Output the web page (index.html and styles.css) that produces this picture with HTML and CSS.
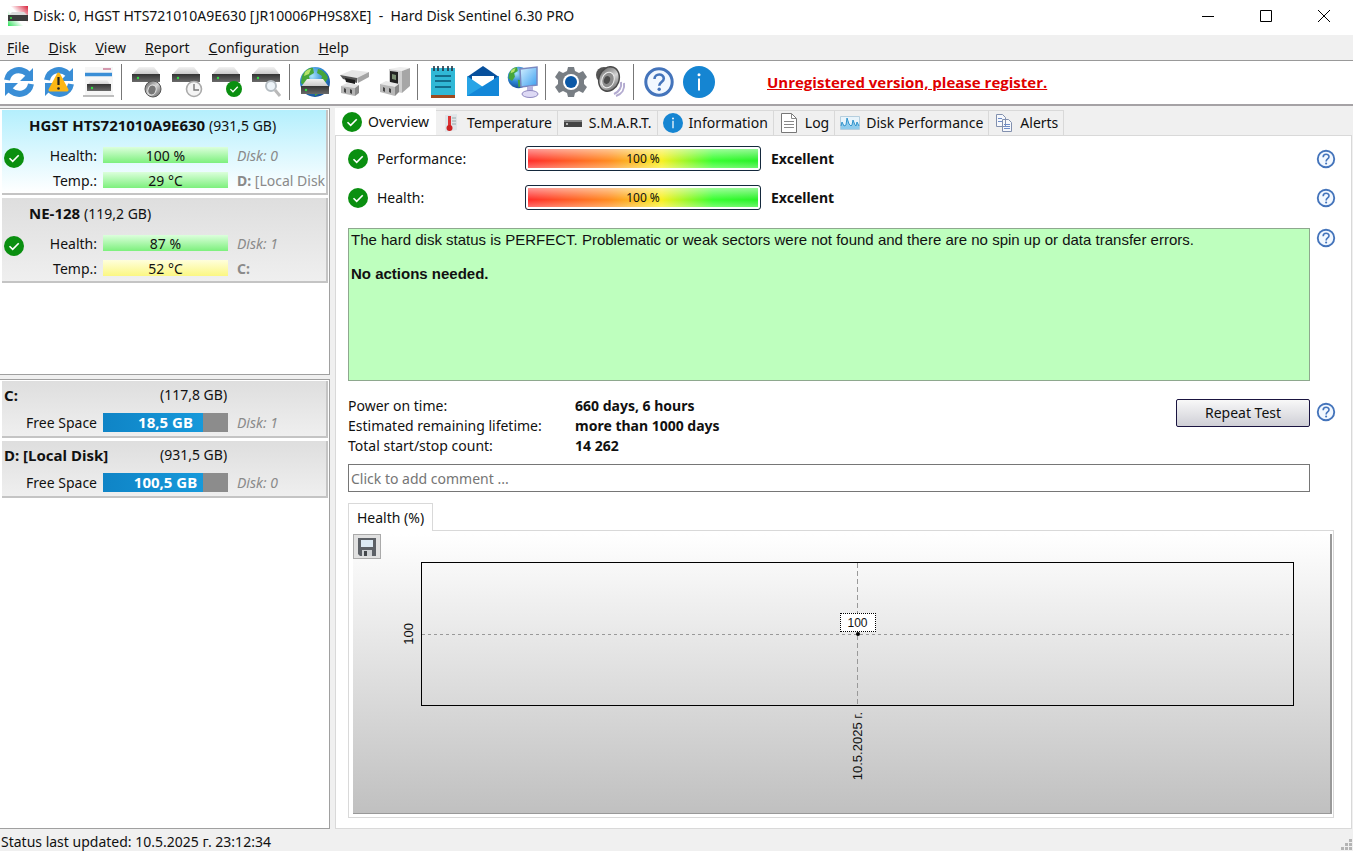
FILE: index.html
```html
<!DOCTYPE html>
<html lang="en">
<head>
  <meta charset="UTF-8">
  <meta name="viewport" content="width=device-width, initial-scale=1.0">
  <title>Hard Disk Sentinel 6.30 PRO</title>
  <link rel="stylesheet" href="styles.css">
</head>
<body>
  <svg class="defs" aria-hidden="true">
    <defs>
      <linearGradient id="g-top" x1="0" y1="0" x2="0" y2="1"><stop offset="0" stop-color="#f2f2f2"/><stop offset="1" stop-color="#c4c4c4"/></linearGradient>
      <linearGradient id="g-front" x1="0" y1="0" x2="0" y2="1"><stop offset="0" stop-color="#333"/><stop offset="1" stop-color="#6a6a6a"/></linearGradient>
      <linearGradient id="g-logo" x1="1" y1="0" x2="0" y2="1"><stop offset="0" stop-color="#d8203a"/><stop offset="0.45" stop-color="#fff"/><stop offset="0.6" stop-color="#fff"/><stop offset="1" stop-color="#2ee05a"/></linearGradient>
      <radialGradient id="g-globe" cx="0.4" cy="0.3" r="0.8"><stop offset="0" stop-color="#a8e4fb"/><stop offset="0.5" stop-color="#2c86d4"/><stop offset="1" stop-color="#123f86"/></radialGradient>
      <linearGradient id="g-speaker" x1="0" y1="0" x2="1" y2="1"><stop offset="0" stop-color="#555"/><stop offset="0.5" stop-color="#d4d4d4"/><stop offset="1" stop-color="#555"/></linearGradient>
      <linearGradient id="g-screen" x1="0" y1="0" x2="1" y2="1"><stop offset="0" stop-color="#d5f0ff"/><stop offset="1" stop-color="#3a9ff0"/></linearGradient>
    </defs>
    <symbol id="i-ok" viewBox="0 0 20 20">
      <circle cx="10" cy="10" r="10" fill="#0a8f10"/>
      <path d="M5.500 10.200l3.200 3.200 6-6.200" fill="none" stroke="#fff" stroke-width="1.600"/>
    </symbol>
    <symbol id="i-help" viewBox="0 0 32 32">
      <circle cx="16" cy="16" r="13.200" fill="#f2f8ff" stroke="#4474bb" stroke-width="3"/>
      <path d="M11.500 13c0-6 9.300-6 9.300-.5 0 3.500-4.600 3.500-4.600 7.300" fill="none" stroke="#4474bb" stroke-width="2.600"/>
      <circle cx="16.200" cy="23.200" r="1.700" fill="#4474bb"/>
    </symbol>
    <symbol id="i-info" viewBox="0 0 32 32">
      <circle cx="16" cy="16" r="16" fill="#1585d2"/>
      <circle cx="16" cy="8.800" r="1.500" fill="#fff"/>
      <path d="M16 12.500v12" stroke="#fff" stroke-width="2"/>
    </symbol>
    <symbol id="i-refresh" viewBox="0 0 32 32">
      <path d="M4 14C6 4 17 1 25 8M28 18C26 28 15 31 7 24" fill="none" stroke="#3a8ed6" stroke-width="6"/>
      <path d="M30 2v13H17zM2 30V17h13z" fill="#3a8ed6"/>
    </symbol>
    <symbol id="i-drive" viewBox="0 0 32 32">
      <path d="M8 1h15l6 8H1z" fill="url(#g-top)"/>
      <path d="M1 8h28v8H1z" fill="url(#g-front)"/>
      <circle cx="7" cy="12" r="1.200" fill="#3d4"/>
    </symbol>
    <symbol id="i-globe" viewBox="0 0 32 32">
      <circle cx="16" cy="16" r="15" fill="url(#g-globe)"/>
      <path d="M3 10c3-6 8-9 11-8l1 5-5 3 1 5-4 6-5-4zM19 3c5 1 9 5 10 9l-3 5-4-2 1-5-5-3zM15 19l6 1 1 6-6 4z" fill="#46a63a"/>
      <path d="M6 6c2-2 4-3 6-3l-2 5-5 2z" fill="#b5e26a"/>
    </symbol>
    <symbol id="i-speaker" viewBox="0 0 32 32">
      <ellipse cx="9" cy="9" rx="8" ry="8" fill="#555"/>
      <ellipse cx="14" cy="13" rx="10" ry="12.500" fill="url(#g-speaker)" stroke="#4a4a4a" stroke-width="1.500" transform="rotate(20 14 13)"/>
      <ellipse cx="13" cy="14" rx="6" ry="8" fill="#8d8d8d" stroke="#eee" transform="rotate(20 13 14)"/>
      <ellipse cx="12" cy="14" rx="3" ry="4" fill="#4c4c4c" transform="rotate(20 12 14)"/>
      <path d="M26 16c1 5-2 10-7 12M29 17c1 6-2 11-8 13" fill="none" stroke="#b3abd0" stroke-width="2"/>
    </symbol>
  </svg>

  <header class="titlebar">
    <svg class="app-logo" viewBox="0 0 20 20">
      <path d="M0 0h20v20H0z" fill="url(#g-logo)"/>
      <path d="M4 6h12l4 4H0z" fill="#dcdcdc"/><path d="M0 9h20v6H0z" fill="#3c3c3c"/>
      <circle cx="3" cy="12" r="1" fill="#3d4"/>
    </svg>
    <h1>Disk: 0, HGST HTS721010A9E630 [JR10006PH9S8XE] &nbsp;- &nbsp;Hard Disk Sentinel 6.30 PRO</h1>
    <div class="window-buttons">
      <button type="button" aria-label="Minimize"><svg viewBox="0 0 14 14"><path d="M1 7.500h12"/></svg></button>
      <button type="button" aria-label="Maximize"><svg viewBox="0 0 14 14"><path d="M1.500 1.500h11v11h-11z"/></svg></button>
      <button type="button" aria-label="Close"><svg viewBox="0 0 14 14"><path d="M1 1l12 12M13 1L1 13"/></svg></button>
    </div>
  </header>

  <nav class="menubar">
    <a href="#"><u>F</u>ile</a>
    <a href="#"><u>D</u>isk</a>
    <a href="#"><u>V</u>iew</a>
    <a href="#"><u>R</u>eport</a>
    <a href="#"><u>C</u>onfiguration</a>
    <a href="#"><u>H</u>elp</a>
  </nav>

  <div class="toolbar">
    <div class="tool-group">
      <button type="button" aria-label="Refresh"><svg viewBox="0 0 32 32"><use href="#i-refresh"/></svg></button>
      <button type="button" aria-label="Refresh now"><svg viewBox="0 0 32 32"><use href="#i-refresh"/><path d="M15.500 8L24 24H7z" fill="#fcb614" stroke="#fcb614" stroke-width="3" stroke-linejoin="round"/><path d="M15.500 11v8" stroke="#222" stroke-width="2.200"/><circle cx="15.500" cy="22.500" r="1.300" fill="#222"/></svg></button>
      <button type="button" aria-label="Drive list"><svg viewBox="0 0 32 32"><path d="M2 1h28v29H2z" fill="#f6f6f6"/><path d="M20 3h8" stroke="#b23a66"/><path d="M2 8.500h27" stroke="#3a8ed6" stroke-width="3.500"/><path d="M8 14h16l4 6H4z" fill="url(#g-top)"/><path d="M4 18h24v7H4z" fill="url(#g-front)"/><circle cx="9" cy="22" r="1.200" fill="#3d4"/><path d="M0 30h31" stroke="#aaa" stroke-width="1.500"/></svg></button>
    </div>
    <div class="tool-group">
      <button type="button" aria-label="Disk sound"><svg viewBox="0 0 32 32"><use href="#i-drive"/><ellipse cx="22" cy="23" rx="8" ry="8" fill="url(#g-speaker)" stroke="#555"/><ellipse cx="21" cy="24" rx="4" ry="5" fill="#777" stroke="#e4e4e4" transform="rotate(20 21 24)"/></svg></button>
      <button type="button" aria-label="Disk schedule"><svg viewBox="0 0 32 32"><use href="#i-drive"/><circle cx="23" cy="23" r="7.500" fill="#f4f4f4" stroke="#aaa" stroke-width="1.600"/><path d="M23 18v6h5" fill="none" stroke="#777" stroke-width="1.400"/></svg></button>
      <button type="button" aria-label="Disk test"><svg viewBox="0 0 32 32"><use href="#i-drive"/><use href="#i-ok" x="15" y="15" width="16" height="16"/></svg></button>
      <button type="button" aria-label="Disk inspect"><svg viewBox="0 0 32 32"><use href="#i-drive"/><circle cx="20" cy="20" r="5" fill="#edf4f9" stroke="#b4bcc2" stroke-width="2"/><path d="M24 24l5 6" stroke="#b9b9b9" stroke-width="3"/></svg></button>
    </div>
    <div class="tool-group">
      <button type="button" aria-label="Online disk info"><svg viewBox="0 0 32 32"><use href="#i-globe"/><path d="M8 13h16l6 8H2z" fill="url(#g-top)"/><path d="M2 20h28v8H2z" fill="url(#g-front)"/><circle cx="7" cy="24" r="1.200" fill="#3d4"/></svg></button>
      <button type="button" aria-label="Disconnect"><svg viewBox="0 0 32 32"><path d="M1 9l12-5 17 2-12 6z" fill="#e6e6e6"/><path d="M18 12l12-6v5l-11 6z" fill="#a4a4a4"/><path d="M1 9l17 3v5L4 13z" fill="#555"/><path d="M6 12l10 2v4l-9-2z" fill="#1e1e1e"/><path d="M2 20l6-3 12 2-4 3z" fill="#e2e2e2"/><path d="M2 20l14 2v8L2 27z" fill="#b4b4b4"/><path d="M16 22l4-3v8l-4 3z" fill="#8a8a8a"/><path d="M5 22l2 1v4l-2-1zM11 23l2 1v4l-2-1z" fill="#444"/></svg></button>
      <button type="button" aria-label="Connect"><svg viewBox="0 0 32 32"><path d="M10 3l11-2 10 1-8 3z" fill="#eee"/><path d="M10 3l13 2v22l-13-3z" fill="#cfcfcf"/><path d="M23 5l8-3v18l-8 7z" fill="#a6a6a6"/><path d="M11 5l8 1v12l-8-1z" fill="#222"/><path d="M13 8l4 1v5l-4-1z" fill="#788c70"/><path d="M1 18l6-3 13 3-4 3z" fill="#e8e8e8"/><path d="M1 18l15 3v9L1 26z" fill="#b8b8b8"/><path d="M16 21l4-3v8l-4 4z" fill="#888"/><path d="M4 21l2 1v4l-2-1zM10 22l2 1v4l-2-1z" fill="#444"/></svg></button>
    </div>
    <div class="tool-group">
      <button type="button" aria-label="Report"><svg viewBox="0 0 32 32"><path d="M4 2h24v27H4z" fill="#30b8d6"/><path d="M4 29h24v3H4z" fill="#a04a1e"/><path d="M7 0v5M11 0v5M16 0v5M21 0v5M25 0v5" stroke="#234" stroke-width="1.600"/><path d="M8 10h16M8 15h16M8 21h16" stroke="#126d8c" stroke-width="2"/></svg></button>
      <button type="button" aria-label="Send mail"><svg viewBox="0 0 32 32"><path d="M0 11L16 0l16 11v18H0z" fill="#08509c"/><path d="M5 10h22v12H5z" fill="#fff"/><path d="M0 10l16 11 16-11v20H0z" fill="#27a4e6"/><path d="M0 30l32-20v20z" fill="#1387d8"/></svg></button>
      <button type="button" aria-label="Network"><svg viewBox="0 0 32 32"><use href="#i-globe" width="23" height="23"/><path d="M13 3l17-2v18l-16 2z" fill="url(#g-screen)" stroke="#7a88c0" stroke-width="1.500"/><path d="M20 21l6-1v6h-6z" fill="#b9b4de"/><ellipse cx="23" cy="28" rx="8" ry="3.500" fill="#ddd9f4" stroke="#8f88c0"/></svg></button>
    </div>
    <div class="tool-group">
      <button type="button" aria-label="Configuration"><svg viewBox="0 0 32 32"><path d="M13 1h6l1 4 4 2 4-2 4 6-3 3v4l3 3-4 6-4-2-4 2-1 4h-6l-1-4-4-2-4 2-4-6 3-3v-4l-3-3 4-6 4 2 4-2z" fill="#787e84"/><circle cx="16" cy="16" r="8" fill="#fff"/><circle cx="16" cy="16" r="6" fill="#0b58a6"/></svg></button>
      <button type="button" aria-label="Alert sound"><svg viewBox="0 0 32 32"><use href="#i-speaker"/></svg></button>
    </div>
    <div class="tool-group">
      <button type="button" aria-label="Help"><svg viewBox="0 0 32 32"><use href="#i-help"/></svg></button>
      <button type="button" aria-label="About"><svg viewBox="0 0 32 32"><use href="#i-info"/></svg></button>
    </div>
    <a class="register" href="#">Unregistered version, please register.</a>
  </div>

  <div class="workspace">
    <aside class="sidebar">
      <section class="disk-list">
        <article class="disk selected">
          <h2>HGST HTS721010A9E630 <span>(931,5 GB)</span></h2>
          <svg class="status-icon" viewBox="0 0 20 20"><use href="#i-ok"/></svg>
          <span class="label">Health:</span><span class="bar green">100 %</span><em>Disk: 0</em>
          <span class="label">Temp.:</span><span class="bar green">29 °C</span><span class="drive"><b>D:</b> [Local Disk</span>
        </article>
        <article class="disk">
          <h2>NE-128 <span>(119,2 GB)</span></h2>
          <svg class="status-icon" viewBox="0 0 20 20"><use href="#i-ok"/></svg>
          <span class="label">Health:</span><span class="bar green">87 %</span><em>Disk: 1</em>
          <span class="label">Temp.:</span><span class="bar yellow">52 °C</span><span class="drive"><b>C:</b></span>
        </article>
      </section>
      <section class="volume-list">
        <article class="volume">
          <h2>C:</h2><span class="size">(117,8 GB)</span>
          <span class="label">Free Space</span><span class="bar space">18,5 GB</span><em>Disk: 1</em>
        </article>
        <article class="volume">
          <h2>D: [Local Disk]</h2><span class="size">(931,5 GB)</span>
          <span class="label">Free Space</span><span class="bar space">100,5 GB</span><em>Disk: 0</em>
        </article>
      </section>
    </aside>

    <main class="content">
      <div class="tabs" role="tablist">
        <button type="button" role="tab" class="active" aria-selected="true"><svg viewBox="0 0 20 20"><use href="#i-ok"/></svg>Overview</button>
        <button type="button" role="tab"><svg viewBox="0 0 20 20"><path d="M4 2l12-1v16l-12 2z" fill="#dfe5e8"/><path d="M11 5h4M11 8h4M11 11h4" stroke="#9aa"/><path d="M7 3h3v10H7z" fill="#d33"/><circle cx="8.500" cy="15" r="3" fill="#c22"/></svg>Temperature</button>
        <button type="button" role="tab"><svg viewBox="0 0 20 20"><path d="M1 8h18v6H1z" fill="#444"/><path d="M1 7h18v2H1z" fill="#888"/><circle cx="4" cy="11" r="1" fill="#ddd"/></svg>S.M.A.R.T.</button>
        <button type="button" role="tab"><svg viewBox="0 0 20 20"><use href="#i-info" width="20" height="20"/></svg>Information</button>
        <button type="button" role="tab"><svg viewBox="0 0 20 20"><path d="M2.500 .5h10l5 5v14h-15z" fill="#fff" stroke="#777"/><path d="M12.500 .5v5h5M5 8.500h10M5 11.500h10M5 14.500h10" fill="none" stroke="#888"/></svg>Log</button>
        <button type="button" role="tab"><svg viewBox="0 0 20 20"><path d="M.5 3.500h19v13H.5z" fill="#e8f4fb" stroke="#b5cede"/><path d="M1 16v-3l1-4 2 4 2-1 1-7 2 6 2 2 1-1 1-5 2 5 1 1 1-4 2 4v3z" fill="#8ecbec"/><path d="M1 13l1-4 2 4 2-1 1-7 2 6 2 2 1-1 1-5 2 5 1 1 1-4 2 4" fill="none" stroke="#3294cc"/></svg>Disk Performance</button>
        <button type="button" role="tab"><svg viewBox="0 0 20 20"><path d="M2.500 1.500h6l3 3v9h-9zM8.500 6.500h6l3 3v9h-9z" fill="#f6f8fc" stroke="#8290ae"/><path d="M4 5.500h4M4 8.500h4M10 11.500h6M10 13.500h6M10 15.500h6" stroke="#6d8cc8"/></svg>Alerts</button>
      </div>

      <div class="page">
        <div class="meter-row">
          <svg class="status-icon" viewBox="0 0 20 20"><use href="#i-ok"/></svg>
          <span class="name">Performance:</span><span class="meter">100 %</span><b>Excellent</b>
          <button type="button" class="help" aria-label="About performance"><svg viewBox="0 0 32 32"><use href="#i-help"/></svg></button>
        </div>
        <div class="meter-row">
          <svg class="status-icon" viewBox="0 0 20 20"><use href="#i-ok"/></svg>
          <span class="name">Health:</span><span class="meter">100 %</span><b>Excellent</b>
          <button type="button" class="help" aria-label="About health"><svg viewBox="0 0 32 32"><use href="#i-help"/></svg></button>
        </div>

        <div class="status-row">
          <div class="status-text">
            <p>The hard disk status is PERFECT. Problematic or weak sectors were not found and there are no spin up or data transfer errors.</p>
            <p><b>No actions needed.</b></p>
          </div>
          <button type="button" class="help" aria-label="About status"><svg viewBox="0 0 32 32"><use href="#i-help"/></svg></button>
        </div>

        <div class="stats-row">
          <table>
            <tr><th scope="row">Power on time:</th><td>660 days, 6 hours</td></tr>
            <tr><th scope="row">Estimated remaining lifetime:</th><td>more than 1000 days</td></tr>
            <tr><th scope="row">Total start/stop count:</th><td>14 262</td></tr>
          </table>
          <button type="button" class="repeat">Repeat Test</button>
          <button type="button" class="help" aria-label="About test"><svg viewBox="0 0 32 32"><use href="#i-help"/></svg></button>
        </div>

        <input class="comment" type="text" aria-label="Comment" placeholder="Click to add comment ...">

        <div class="chart-tabs"><button type="button">Health (%)</button></div>
        <div class="chart-frame">
          <div class="chart">
            <button type="button" class="save" aria-label="Save chart"><svg viewBox="0 0 18 18"><path d="M0 0h18v18H2l-2-2z" fill="#5c6066"/><path d="M3 2h12v7H3z" fill="#dce9f3"/><path d="M4 12h10v6H4z" fill="#cfd2d5"/><path d="M6 13h3v5H6z" fill="#44474b"/></svg></button>
            <span class="y-label">100</span>
            <div class="plot"><span class="tip">100</span><i class="point"></i></div>
            <span class="x-label">10.5.2025 г.</span>
          </div>
        </div>
      </div>
    </main>
  </div>

  <footer class="statusbar">
    <span>Status last updated: 10.5.2025 г. 23:12:34</span>
    <svg viewBox="0 0 12 12"><path d="M8 0h3v3H8zM4 4h3v3H4zM8 4h3v3H8zM0 8h3v3H0zM4 8h3v3H4zM8 8h3v3H8z" fill="#b4b4b4"/></svg>
  </footer>
</body>
</html>
```
FILE: styles.css
```css
* {
  box-sizing: border-box;
}
body {
  display: flex;
  flex-direction: column;
  min-height: 100vh;
  margin: 0;
  background: #f0f0f0;
  color: #111;
  font-family: "Noto Sans", "Open Sans", sans-serif;
  font-size: 14px;
  line-height: 20px;
}
button {
  padding: 0;
  border: 0;
  background: none;
  color: inherit;
  font: inherit;
}
svg {
  display: block;
  flex: none;
}
.defs {
  position: absolute;
  width: 0;
  height: 0;
}
h1,
h2,
p {
  margin: 0;
  font-size: 14px;
  font-weight: normal;
}

/* window title */
.titlebar {
  display: flex;
  align-items: center;
  height: 35px;
  padding: 0 0 3px 8px;
  background: #fff;
}
.titlebar h1 {
  flex: 1;
  margin-left: 5px;
}
.app-logo {
  width: 20px;
  height: 20px;
}
.window-buttons {
  display: flex;
}
.window-buttons button {
  display: grid;
  place-items: center;
  width: 58px;
  height: 32px;
}
.window-buttons svg {
  width: 14px;
  height: 14px;
  fill: none;
  stroke: #000;
}

.menubar {
  display: flex;
  gap: 19px;
  height: 26px;
  padding: 3px 7px;
  border-bottom: 1px solid #999;
}
.menubar a {
  color: inherit;
  text-decoration: none;
}

/* toolbar */
.toolbar {
  display: flex;
  align-items: center;
  height: 45px;
  padding: 0 0 2px 3px;
  border-bottom: 2px solid #a5a2a5;
  background: #fff;
}
.tool-group {
  display: flex;
  align-items: center;
  gap: 8px;
}
.tool-group + .tool-group {
  margin-left: 6px;
  padding-left: 9px;
  border-left: 1px solid #777;
  height: 36px;
}
.tool-group svg {
  width: 32px;
  height: 32px;
}
.register {
  margin-left: 52px;
  color: #e00000;
  font-family: "Open Sans", "Noto Sans", sans-serif;
  font-size: 15px;
  font-weight: bold;
}

.workspace {
  display: flex;
  flex: 1;
  padding-top: 2px;
}

/* disks and volumes */
.sidebar {
  display: flex;
  flex-direction: column;
  gap: 4px;
  width: 330px;
  flex: none;
}
.disk-list,
.volume-list {
  display: flex;
  flex-direction: column;
  gap: 3px;
  padding: 1px 1px 1px 2px;
  border: 1px solid #a0a0a0;
  border-left: 0;
  background: #fff;
}
.disk-list {
  height: 267px;
}
.volume-list {
  flex: 1;
}
.disk,
.volume {
  display: grid;
  align-items: center;
  border-right: 2px solid #c4c4c4;
  border-bottom: 2px solid #c4c4c4;
  background: linear-gradient(#dedede, #efefef);
  white-space: nowrap;
  overflow: hidden;
}
.disk {
  grid-template-columns: 20px 73px 131px 1fr;
  grid-template-rows: 33px 25px 25px;
  height: 85px;
  padding-left: 2px;
}
.disk.selected {
  background: linear-gradient(#b4effd, #fff);
}
.disk h2 {
  grid-column: 1 / -1;
  padding: 0 0 3px 25px;
}
.disk h2,
.volume h2 {
  font-size: 15px;
  font-weight: bold;
}
.disk h2 span {
  font-size: 14px;
  font-weight: normal;
}
.disk .status-icon {
  grid-row: 2 / 4;
  align-self: start;
  margin-top: 5px;
}
.status-icon {
  width: 20px;
  height: 20px;
}
.label {
  text-align: right;
}
.bar {
  height: 16px;
  margin: 0 0 2px 6px;
  line-height: 17px;
  text-align: center;
}
.bar.green {
  background: linear-gradient(#dcffdc, #7df07d);
}
.bar.yellow {
  background: linear-gradient(#ffffdc, #fbf782);
}
.disk em,
.drive,
.volume em {
  padding-left: 9px;
  color: #8a8a8a;
}
.volume {
  grid-template-columns: 93px 131px 1fr;
  grid-template-rows: 28px 27px;
  height: 57px;
  padding-left: 2px;
}
.volume .size {
  grid-column: 2 / -1;
  padding-left: 63px;
}
.volume .bar {
  height: 19px;
  margin-bottom: 0;
  background: linear-gradient(90deg, #0f84c6, #1799da 80%, #8c8c8c 80%);
  color: #fff;
  font-size: 15px;
  font-weight: bold;
  line-height: 19px;
}

/* tabs */
.content {
  display: flex;
  flex-direction: column;
  flex: 1;
  min-width: 0;
  margin: 0 1px 0 5px;
}
.tabs {
  display: flex;
  align-items: flex-end;
  height: 27px;
}
.tabs button {
  display: flex;
  align-items: center;
  gap: 6px;
  height: 25px;
  padding: 0 5px;
  border: solid #d9d9d9;
  border-width: 1px 1px 0 0;
  white-space: nowrap;
}
.tabs button.active {
  height: 27px;
  padding: 0 7px;
  border: 0;
  background: #fff;
}
.tabs svg {
  width: 20px;
  height: 20px;
}
.page {
  display: flex;
  flex-direction: column;
  flex: 1;
  padding: 3px 17px 10px 12px;
  border: 1px solid #d9d9d9;
  background: #fff;
}
.help svg {
  width: 20px;
  height: 20px;
}
.meter-row {
  display: flex;
  align-items: center;
  height: 39px;
}
.meter-row .name {
  width: 148px;
  margin-left: 9px;
}
.meter {
  width: 236px;
  height: 25px;
  margin-right: 10px;
  border: 1px solid #14283c;
  border-radius: 3px;
  background:
    linear-gradient(rgba(255, 255, 255, 0.6), rgba(255, 255, 255, 0) 60%, rgba(255, 255, 255, 0.4)),
    linear-gradient(90deg, #ff2a2a, #ff8a20 35%, #f8f020 58%, #38ff30 80%, #28f028);
  box-shadow: inset 0 0 0 2px #fff;
  font-size: 12px;
  line-height: 24px;
  text-align: center;
}
.meter-row .help {
  margin: 0 -2px 0 auto;
}
.status-row {
  display: flex;
  align-items: flex-start;
  gap: 6px;
  margin: 11px -2px 0 0;
}
.status-text {
  flex: 1;
  min-height: 153px;
  padding: 2px;
  border: 1px solid #8ea88e;
  background: #beffbe;
  font-family: "Liberation Sans", Arial, sans-serif;
  line-height: 17px;
}
.status-text p {
  margin-bottom: 17px;
  font-size: 15px;
}
.stats-row {
  display: flex;
  align-items: flex-start;
  margin: 15px -2px 8px 0;
}
.stats-row table {
  margin-right: auto;
  border-collapse: collapse;
}
.stats-row th,
.stats-row td {
  padding: 0;
  font-weight: normal;
  text-align: left;
}
.stats-row th {
  width: 227px;
}
.stats-row td {
  font-weight: bold;
}
.repeat {
  width: 134px;
  height: 28px;
  margin: 3px 6px 0 0;
  border: 1px solid #1a1440;
  border-radius: 2px;
  background: linear-gradient(#f8f8f8, #cfcfd6);
}
.stats-row .help {
  margin-top: 6px;
}
.comment {
  height: 28px;
  margin-right: 24px;
  padding: 0 2px;
  border: 1px solid #767676;
  background: #fff;
  font: inherit;
}
.comment::placeholder {
  color: #757575;
}

/* health chart */
.chart-tabs {
  display: flex;
  margin-top: 11px;
}
.chart-tabs button {
  position: relative;
  height: 28px;
  margin-bottom: -1px;
  padding: 0 8px;
  border: 1px solid #d9d9d9;
  border-bottom: 0;
  background: #fff;
}
.chart-frame {
  display: flex;
  flex: 1;
  min-height: 240px;
  padding: 3px 1px 3px 4px;
  border: 1px solid #d9d9d9;
}
.chart {
  display: grid;
  flex: 1;
  grid-template-columns: 68px 1fr 36px;
  grid-template-rows: 28px 1fr 107px;
  border-right: 2px solid #999;
  border-bottom: 1px solid #999;
  background: linear-gradient(#fff, #c0c0c0);
  font-family: "Liberation Sans", Arial, sans-serif;
}
.save {
  display: grid;
  grid-column: 1 / -1;
  place-items: center;
  width: 28px;
  height: 25px;
  border: 1px solid #aaa;
  background: #e1e1e1;
}
.save svg {
  width: 18px;
  height: 18px;
}
.y-label,
.x-label {
  writing-mode: vertical-rl;
  transform: rotate(180deg);
  font-size: 13px;
}
.y-label {
  place-self: center end;
  margin-right: 2px;
}
.x-label {
  grid-column: 2;
  justify-self: center;
  align-self: start;
  margin-top: 6px;
}
.plot {
  position: relative;
  border: 1px solid #000;
  background:
    repeating-linear-gradient(90deg, #999 0 3px, transparent 3px 6px) 0 50% / 100% 1px no-repeat,
    repeating-linear-gradient(#999 0 5px, transparent 5px 8px) 50% 0 / 1px 100% no-repeat;
}
.tip {
  position: absolute;
  bottom: calc(50% + 2px);
  left: calc(50% - 18px);
  width: 36px;
  height: 19px;
  border: 1px dotted #000;
  background: #fff;
  font-size: 12px;
  line-height: 18px;
  text-align: center;
}
.point {
  position: absolute;
  top: calc(50% - 2px);
  left: calc(50% - 2px);
  width: 4px;
  height: 4px;
  border-radius: 2px;
  background: #000;
}

.statusbar {
  display: flex;
  align-items: flex-end;
  justify-content: space-between;
  height: 22px;
  padding-left: 1px;
}
.statusbar span {
  align-self: center;
  padding-top: 4px;
}
.statusbar svg {
  width: 12px;
  height: 12px;
}
```
